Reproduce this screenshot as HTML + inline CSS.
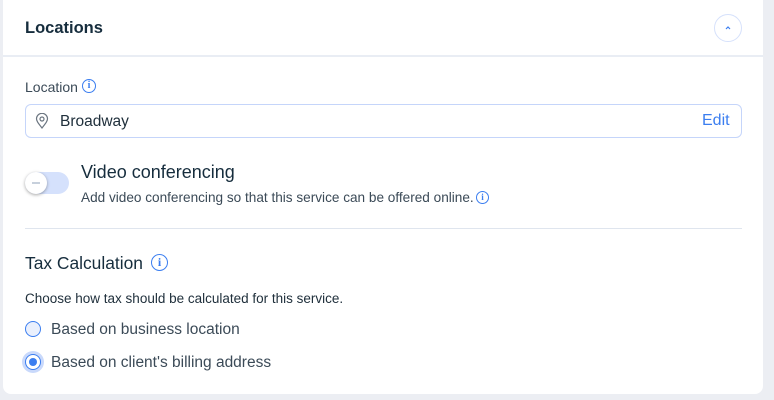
<!DOCTYPE html>
<html><head><style>
*{margin:0;padding:0;box-sizing:border-box}
body{width:774px;height:400px;background:#eceef3;font-family:"Liberation Sans",sans-serif;color:#20303c;position:relative;overflow:hidden}
.card{position:absolute;left:3px;top:-10px;width:760px;height:404px;background:#fff;border-radius:8px}
.a{position:absolute;white-space:nowrap}
.info{position:absolute;border:1.5px solid #3b7ef0;border-radius:50%;color:#3b7ef0;font-size:10px;font-weight:bold;text-align:center;font-family:"Liberation Serif",serif}
</style></head><body>
<div class="card"></div>
<div class="a" style="left:25px;top:19px;font-size:16.5px;font-weight:bold;color:#162d3d">Locations</div>
<div class="a" style="left:714px;top:14px;width:28px;height:28px;border:1px solid #d6e1fb;border-radius:50%"></div>
<svg class="a" style="left:723px;top:23px" width="10" height="10" viewBox="0 0 10 10"><path d="M3 6 L5 4 L7 6" fill="none" stroke="#3b7ef0" stroke-width="1.2"/></svg>
<div class="a" style="left:3px;top:55px;width:760px;height:2px;background:#e9edf4"></div>
<div class="a" style="left:25px;top:79px;font-size:14px;color:#3b4a57">Location</div>
<div class="info" style="left:82px;top:79px;width:14px;height:14px;line-height:12px">i</div>
<div class="a" style="left:25px;top:104px;width:717px;height:34px;border:1px solid #c5d5fa;border-radius:6px"></div>
<svg class="a" style="left:35px;top:113px" width="14" height="16" viewBox="0 0 14 16"><path d="M7 15 C3 10 1.5 8 1.5 5.8 A5.5 5.5 0 0 1 12.5 5.8 C12.5 8 11 10 7 15Z" fill="none" stroke="#6b7580" stroke-width="1.2"/><circle cx="7" cy="6" r="2" fill="none" stroke="#6b7580" stroke-width="1.2"/></svg>
<div class="a" style="left:60px;top:113px;font-size:15.5px;color:#20303c">Broadway</div>
<div class="a" style="left:702px;top:112px;font-size:16px;color:#3b7ef0">Edit</div>
<div class="a" style="left:25px;top:172px;width:44px;height:22px;border-radius:11px;background:#d5e1fc"></div>
<div class="a" style="left:25px;top:172px;width:22px;height:22px;border-radius:50%;background:#fff;box-shadow:0 1px 3px rgba(0,0,0,.35)"></div>
<div class="a" style="left:32px;top:182px;width:8px;height:1.5px;background:#c7d0dc"></div>
<div class="a" style="left:81px;top:162px;font-size:18px;color:#162d3d">Video conferencing</div>
<div class="a" style="left:81px;top:190px;font-size:13.6px;color:#3b4a57">Add video conferencing so that this service can be offered online.</div>
<div class="info" style="left:476px;top:191px;width:13px;height:13px;line-height:11px;font-size:9px">i</div>
<div class="a" style="left:25px;top:228px;width:717px;height:1px;background:#dfe5ee"></div>
<div class="a" style="left:25px;top:253px;font-size:17.4px;color:#162d3d">Tax Calculation</div>
<div class="info" style="left:151px;top:254px;width:17px;height:17px;line-height:15px;font-size:12px">i</div>
<div class="a" style="left:25px;top:291px;font-size:13.5px;color:#20303c">Choose how tax should be calculated for this service.</div>
<div class="a" style="left:25px;top:321px;width:16px;height:16px;border:1.5px solid #3b7ef0;border-radius:50%;background:#eaf0fd"></div>
<div class="a" style="left:51px;top:321px;font-size:15.5px;color:#3b4a57">Based on business location</div>
<div class="a" style="left:25px;top:354px;width:16px;height:16px;border:1.5px solid #3b7ef0;border-radius:50%;background:#fff;box-shadow:0 0 0 3px #c9d9fb"></div>
<div class="a" style="left:29px;top:358px;width:8px;height:8px;border-radius:50%;background:#3b7ef0"></div>
<div class="a" style="left:51px;top:354px;font-size:15.5px;color:#3b4a57">Based on client's billing address</div>
</body></html>
